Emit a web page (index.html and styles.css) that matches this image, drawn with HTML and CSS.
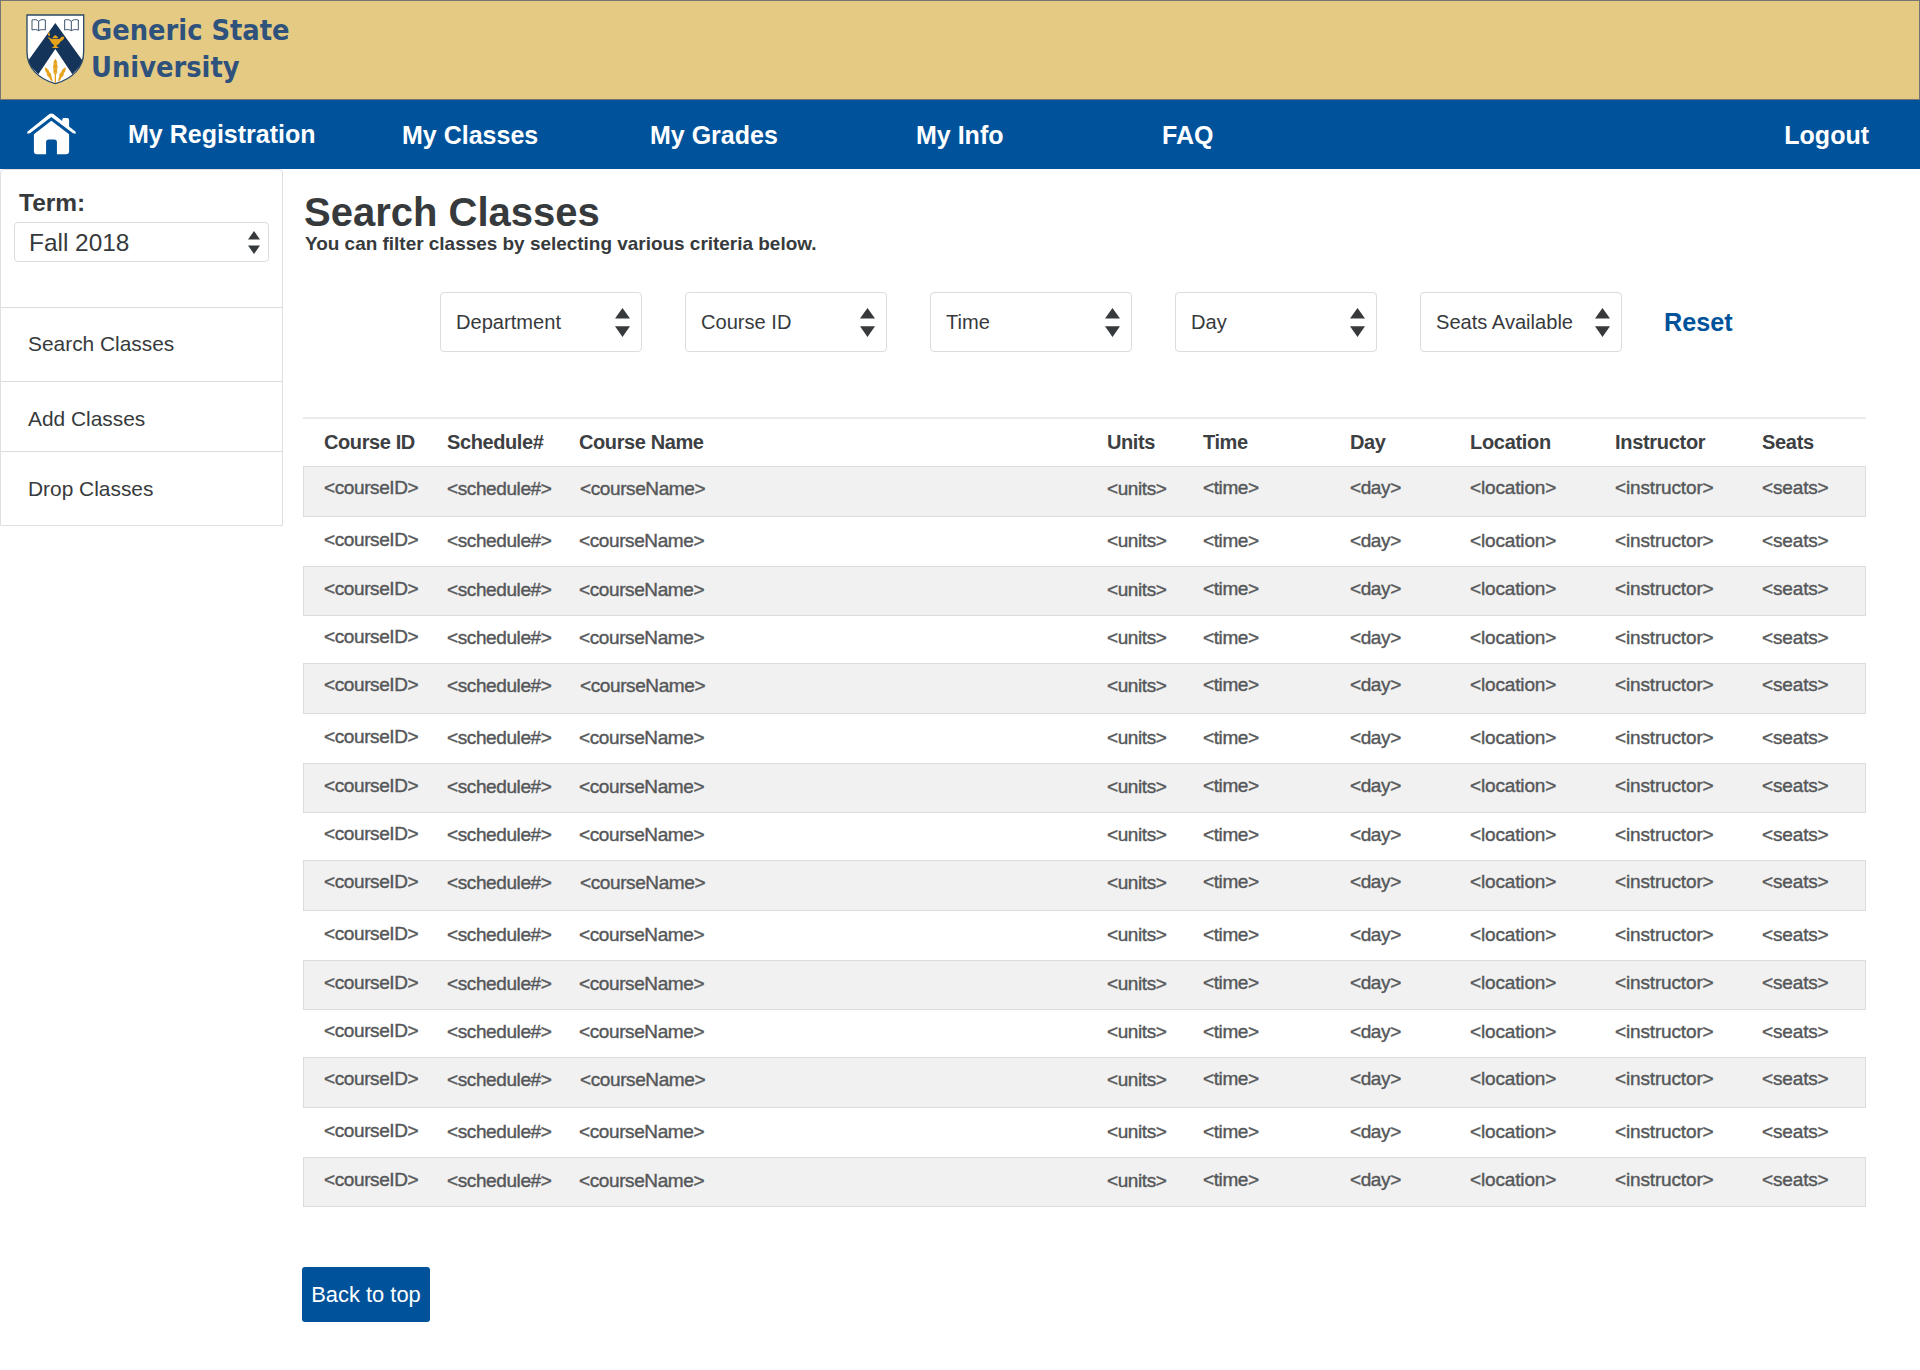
FILE: index.html
```html
<!DOCTYPE html>
<html lang="en">
<head>
<meta charset="utf-8">
<title>Search Classes</title>
<link rel="stylesheet" href="styles.css">
</head>
<body>
<header class="banner">
  <svg class="crest" viewBox="33 27 177 213" aria-hidden="true">
    <defs><clipPath id="shield"><path d="M36 30H206V140C206 188 172 222 121 236C70 222 36 188 36 140Z"/></clipPath></defs>
    <g clip-path="url(#shield)">
      <path fill="#fff" d="M30 24H212V240H30Z"/>
      <path fill="#15345a" d="M121 54L206 172L172 208L121 132L70 208L36 172Z"/>
    </g>
    <path fill="none" stroke="#2d4a66" stroke-width="4" d="M36 30H206V140C206 188 172 222 121 236C70 222 36 188 36 140Z"/>
    <g fill="none" stroke="#3c526b" stroke-width="3">
      <path d="M71 49C65 43 58 43 51 45V75C58 73 65 73 71 77C77 73 84 73 91 75V45C84 43 77 43 71 49V77"/>
      <path d="M169 49C163 43 156 43 149 45V75C156 73 163 73 169 77C175 73 182 73 190 75V45C182 43 175 43 169 49V77"/>
    </g>
    <g fill="#e6a21a">
      <path d="M98 97C104 96 106 101 110 102H134C137 96 143 92 147 96C149 102 142 107 136 110C133 117 128 119 125 120V124L132 129H110L117 124V120C108 116 108 106 98 97Z"/>
      <path d="M112 100C113 95 118 94 119 91H123C124 94 129 95 130 100Z"/>
      <path d="M101 92C97 89 99 84 103 80C102 85 107 88 104 93Z"/>
      <path d="M121 161C127 168 127 174 126 178C129 186 128 190 126 194C128 201 126 206 123 208V233H119V208C116 206 114 201 116 194C114 190 113 186 116 178C115 174 115 168 121 161Z"/>
      <path d="M90 187C98 190 102 196 103 202C108 205 110 210 109 214L114 230L107 226L102 217C96 213 95 209 96 205C90 200 90 194 90 187Z"/>
      <path d="M152 187C144 190 140 196 139 202C134 205 132 210 133 214L128 230L135 226L140 217C146 213 147 209 146 205C152 200 152 194 152 187Z"/>
    </g>
    <path stroke="#efd08c" stroke-width="1.4" d="M115 172L121 178L127 172M115 186L121 192L127 186M115 200L121 205L127 200" fill="none"/>
  </svg>
  <div class="brand">Generic State<br>University</div>
</header>

<nav class="nav">
  <a class="nav-home">
    <svg class="home-icon" viewBox="80 340 149 127" aria-label="Home">
      <g fill="#fff">
        <path d="M154 341Q157 341 160 343L187 364V360Q187 355 192 355H202Q208 355 208 361V381L228 397V403L220 401L154 352L89 401L81 403V397L148 343Q151 341 154 341Z"/>
        <path d="M154 363L208 404V456Q208 465 199 465H171V428Q171 420 163 420H146Q138 420 138 428V465H110Q101 465 101 456V404Z"/>
      </g>
    </svg>
  </a>
  <a class="nav-first">My Registration</a>
  <a>My Classes</a>
  <a>My Grades</a>
  <a>My Info</a>
  <a>FAQ</a>
  <a>Logout</a>
</nav>

<div class="page">
  <aside class="sidebar">
    <div class="term">
      <div class="term-label">Term:</div>
      <div class="term-select"><span>Fall 2018</span>
        <svg class="term-arrows" viewBox="0 0 12 23"><path d="M6 0L12 8.6H0ZM0 14.4H12L6 23Z"/></svg>
      </div>
    </div>
    <a class="side-link side-search">Search Classes</a>
    <a class="side-link side-add">Add Classes</a>
    <a class="side-link side-drop">Drop Classes</a>
  </aside>

  <main class="main">
    <h1>Search Classes</h1>
    <p class="hint">You can filter classes by selecting various criteria below.</p>

    <div class="filters">
      <div class="filter">Department<svg class="arrows" viewBox="0 0 15 29"><path d="M7.5 0L15 10.5H0ZM0 18.3H15L7.5 29Z"/></svg></div>
      <div class="filter">Course ID<svg class="arrows" viewBox="0 0 15 29"><path d="M7.5 0L15 10.5H0ZM0 18.3H15L7.5 29Z"/></svg></div>
      <div class="filter">Time<svg class="arrows" viewBox="0 0 15 29"><path d="M7.5 0L15 10.5H0ZM0 18.3H15L7.5 29Z"/></svg></div>
      <div class="filter">Day<svg class="arrows" viewBox="0 0 15 29"><path d="M7.5 0L15 10.5H0ZM0 18.3H15L7.5 29Z"/></svg></div>
      <div class="filter">Seats Available<svg class="arrows" viewBox="0 0 15 29"><path d="M7.5 0L15 10.5H0ZM0 18.3H15L7.5 29Z"/></svg></div>
      <a class="reset">Reset</a>
    </div>

    <div class="row head"><span>Course ID</span><span>Schedule#</span><span>Course Name</span><span>Units</span><span>Time</span><span>Day</span><span>Location</span><span>Instructor</span><span>Seats</span></div>
    <div class="rows">
      <div class="row"><span>&lt;courseID&gt;</span><span>&lt;schedule#&gt;</span><span>&lt;courseName&gt;</span><span>&lt;units&gt;</span><span>&lt;time&gt;</span><span>&lt;day&gt;</span><span>&lt;location&gt;</span><span>&lt;instructor&gt;</span><span>&lt;seats&gt;</span></div>
      <div class="row"><span>&lt;courseID&gt;</span><span>&lt;schedule#&gt;</span><span>&lt;courseName&gt;</span><span>&lt;units&gt;</span><span>&lt;time&gt;</span><span>&lt;day&gt;</span><span>&lt;location&gt;</span><span>&lt;instructor&gt;</span><span>&lt;seats&gt;</span></div>
      <div class="row"><span>&lt;courseID&gt;</span><span>&lt;schedule#&gt;</span><span>&lt;courseName&gt;</span><span>&lt;units&gt;</span><span>&lt;time&gt;</span><span>&lt;day&gt;</span><span>&lt;location&gt;</span><span>&lt;instructor&gt;</span><span>&lt;seats&gt;</span></div>
      <div class="row"><span>&lt;courseID&gt;</span><span>&lt;schedule#&gt;</span><span>&lt;courseName&gt;</span><span>&lt;units&gt;</span><span>&lt;time&gt;</span><span>&lt;day&gt;</span><span>&lt;location&gt;</span><span>&lt;instructor&gt;</span><span>&lt;seats&gt;</span></div>
      <div class="row"><span>&lt;courseID&gt;</span><span>&lt;schedule#&gt;</span><span>&lt;courseName&gt;</span><span>&lt;units&gt;</span><span>&lt;time&gt;</span><span>&lt;day&gt;</span><span>&lt;location&gt;</span><span>&lt;instructor&gt;</span><span>&lt;seats&gt;</span></div>
      <div class="row"><span>&lt;courseID&gt;</span><span>&lt;schedule#&gt;</span><span>&lt;courseName&gt;</span><span>&lt;units&gt;</span><span>&lt;time&gt;</span><span>&lt;day&gt;</span><span>&lt;location&gt;</span><span>&lt;instructor&gt;</span><span>&lt;seats&gt;</span></div>
      <div class="row"><span>&lt;courseID&gt;</span><span>&lt;schedule#&gt;</span><span>&lt;courseName&gt;</span><span>&lt;units&gt;</span><span>&lt;time&gt;</span><span>&lt;day&gt;</span><span>&lt;location&gt;</span><span>&lt;instructor&gt;</span><span>&lt;seats&gt;</span></div>
      <div class="row"><span>&lt;courseID&gt;</span><span>&lt;schedule#&gt;</span><span>&lt;courseName&gt;</span><span>&lt;units&gt;</span><span>&lt;time&gt;</span><span>&lt;day&gt;</span><span>&lt;location&gt;</span><span>&lt;instructor&gt;</span><span>&lt;seats&gt;</span></div>
      <div class="row"><span>&lt;courseID&gt;</span><span>&lt;schedule#&gt;</span><span>&lt;courseName&gt;</span><span>&lt;units&gt;</span><span>&lt;time&gt;</span><span>&lt;day&gt;</span><span>&lt;location&gt;</span><span>&lt;instructor&gt;</span><span>&lt;seats&gt;</span></div>
      <div class="row"><span>&lt;courseID&gt;</span><span>&lt;schedule#&gt;</span><span>&lt;courseName&gt;</span><span>&lt;units&gt;</span><span>&lt;time&gt;</span><span>&lt;day&gt;</span><span>&lt;location&gt;</span><span>&lt;instructor&gt;</span><span>&lt;seats&gt;</span></div>
      <div class="row"><span>&lt;courseID&gt;</span><span>&lt;schedule#&gt;</span><span>&lt;courseName&gt;</span><span>&lt;units&gt;</span><span>&lt;time&gt;</span><span>&lt;day&gt;</span><span>&lt;location&gt;</span><span>&lt;instructor&gt;</span><span>&lt;seats&gt;</span></div>
      <div class="row"><span>&lt;courseID&gt;</span><span>&lt;schedule#&gt;</span><span>&lt;courseName&gt;</span><span>&lt;units&gt;</span><span>&lt;time&gt;</span><span>&lt;day&gt;</span><span>&lt;location&gt;</span><span>&lt;instructor&gt;</span><span>&lt;seats&gt;</span></div>
      <div class="row"><span>&lt;courseID&gt;</span><span>&lt;schedule#&gt;</span><span>&lt;courseName&gt;</span><span>&lt;units&gt;</span><span>&lt;time&gt;</span><span>&lt;day&gt;</span><span>&lt;location&gt;</span><span>&lt;instructor&gt;</span><span>&lt;seats&gt;</span></div>
      <div class="row"><span>&lt;courseID&gt;</span><span>&lt;schedule#&gt;</span><span>&lt;courseName&gt;</span><span>&lt;units&gt;</span><span>&lt;time&gt;</span><span>&lt;day&gt;</span><span>&lt;location&gt;</span><span>&lt;instructor&gt;</span><span>&lt;seats&gt;</span></div>
      <div class="row"><span>&lt;courseID&gt;</span><span>&lt;schedule#&gt;</span><span>&lt;courseName&gt;</span><span>&lt;units&gt;</span><span>&lt;time&gt;</span><span>&lt;day&gt;</span><span>&lt;location&gt;</span><span>&lt;instructor&gt;</span><span>&lt;seats&gt;</span></div>
    </div>

    <a class="to-top">Back to top</a>
  </main>
</div>
</body>
</html>
```
FILE: styles.css
```css
* {
  box-sizing: border-box;
}

body {
  margin: 0;
  min-height: 1370px;
  background: #fff;
  color: #373a3c;
  font-family: "Liberation Sans", Arial, sans-serif;
}

/* Banner */
.banner {
  display: flex;
  align-items: flex-start;
  height: 100px;
  padding: 13px 0 0 25px;
  background: #e5ca84;
  border: 1px solid #77756f;
}

.crest {
  width: 59px;
  height: 71px;
}

.brand {
  margin: -2px 0 0 6px;
  color: #2f527d;
  font: bold 28.7px/37px "DejaVu Sans Condensed", "DejaVu Sans", sans-serif;
  font-stretch: condensed;
}

/* Navigation */
.nav {
  display: grid;
  grid-template-columns: 101px 274px 248px 266px 246px 1fr auto;
  align-items: start;
  height: 69px;
  padding: 20px 51px 0 27px;
  background: #00539b;
  color: #fff;
  font-size: 25px;
  font-weight: bold;
  line-height: 30px;
}

.nav-home {
  margin-top: -7px;
  height: 42px;
}

.home-icon {
  display: block;
  width: 49px;
  height: 42px;
}

.nav-first {
  margin-top: -1px;
}

.page {
  display: flex;
  align-items: flex-start;
}

/* Sidebar */
.sidebar {
  width: 283px;
  border: 1px solid #e0e0e0;
  border-radius: 4px 4px 0 0;
}

.term {
  height: 137px;
  padding: 19px 0 0 13px;
}

.term-label {
  padding-left: 5px;
  font-size: 24.5px;
  font-weight: bold;
  line-height: 28px;
}

.term-select {
  display: flex;
  justify-content: space-between;
  align-items: center;
  width: 255px;
  height: 40px;
  margin-top: 5px;
  padding: 0 8px 0 14px;
  border: 1px solid #dcdcdc;
  border-radius: 4px;
  font-size: 24.4px;
}

.term-select span {
  padding-top: 2px;
}

.term-arrows {
  width: 12px;
  height: 23px;
  fill: #373a3c;
}

.side-link {
  display: block;
  padding-left: 27px;
  border-top: 1px solid #dcdcdc;
  font-size: 20.9px;
  line-height: 24px;
}

.side-search {
  height: 74px;
  padding-top: 24px;
}

.side-add {
  height: 70px;
  padding-top: 25px;
}

.side-drop {
  height: 74px;
  padding-top: 25px;
}

/* Content */
.main {
  width: 1563px;
  margin-left: 20px;
  padding-top: 21px;
}

h1 {
  margin: 0 0 0 1px;
  font-size: 40px;
  line-height: 44px;
}

.hint {
  margin: 0 0 0 2px;
  font-size: 18.95px;
  font-weight: bold;
  line-height: 20px;
}

.filters {
  display: flex;
  align-items: center;
  gap: 43px;
  margin: 38px 0 65px 137px;
}

.filter {
  display: flex;
  justify-content: space-between;
  align-items: center;
  width: 202px;
  height: 60px;
  padding: 0 11px 0 15px;
  border: 1px solid #dcdcdc;
  border-radius: 4px;
  font-size: 20.1px;
}

.arrows {
  width: 15px;
  height: 29px;
  fill: #373a3c;
}

.reset {
  margin-left: -1px;
  color: #00539b;
  font-size: 25.2px;
  font-weight: bold;
}

/* Results */
.row {
  display: grid;
  grid-template-columns: 123px 132px 528px 96px 147px 120px 145px 147px auto;
  align-items: start;
  height: 49px;
  padding: 13px 0 0 21px;
  font-size: 19px;
  line-height: 21px;
  letter-spacing: -0.4px;
  color: #555759;
  -webkit-text-stroke: 0.4px #555759;
}

.row span:nth-child(n+7) {
  letter-spacing: -0.15px;
}

.head {
  padding-top: 12px;
  border-top: 2px solid #ebebeb;
  color: #3d4042;
  font-size: 20px;
  font-weight: bold;
  line-height: 22px;
  -webkit-text-stroke: 0;
}

.head span:nth-child(n+7) {
  letter-spacing: -0.3px;
}

.rows .row:nth-child(odd) {
  padding-left: 20px;
  background: #f1f1f1;
  border: 1px solid #dcdcdc;
}

.rows .row:nth-child(4n+1) {
  height: 51px;
  padding-top: 11px;
}

.rows .row:nth-child(4n+3) {
  height: 50px;
  padding-top: 12px;
}

.rows .row:nth-child(4n) {
  height: 47px;
  padding-top: 11px;
}

.rows .row span:first-child,
.rows .row:nth-child(odd) span:nth-child(n+5) {
  margin-top: -1px;
}

.rows .row:nth-child(4n+1) span:nth-child(3) {
  margin-left: 1px;
}

.to-top {
  display: block;
  width: 128px;
  height: 55px;
  margin: 60px 0 0 -1px;
  border-radius: 3px;
  background: #00539b;
  color: #fff;
  font-size: 21.9px;
  line-height: 55px;
  text-align: center;
}
```
